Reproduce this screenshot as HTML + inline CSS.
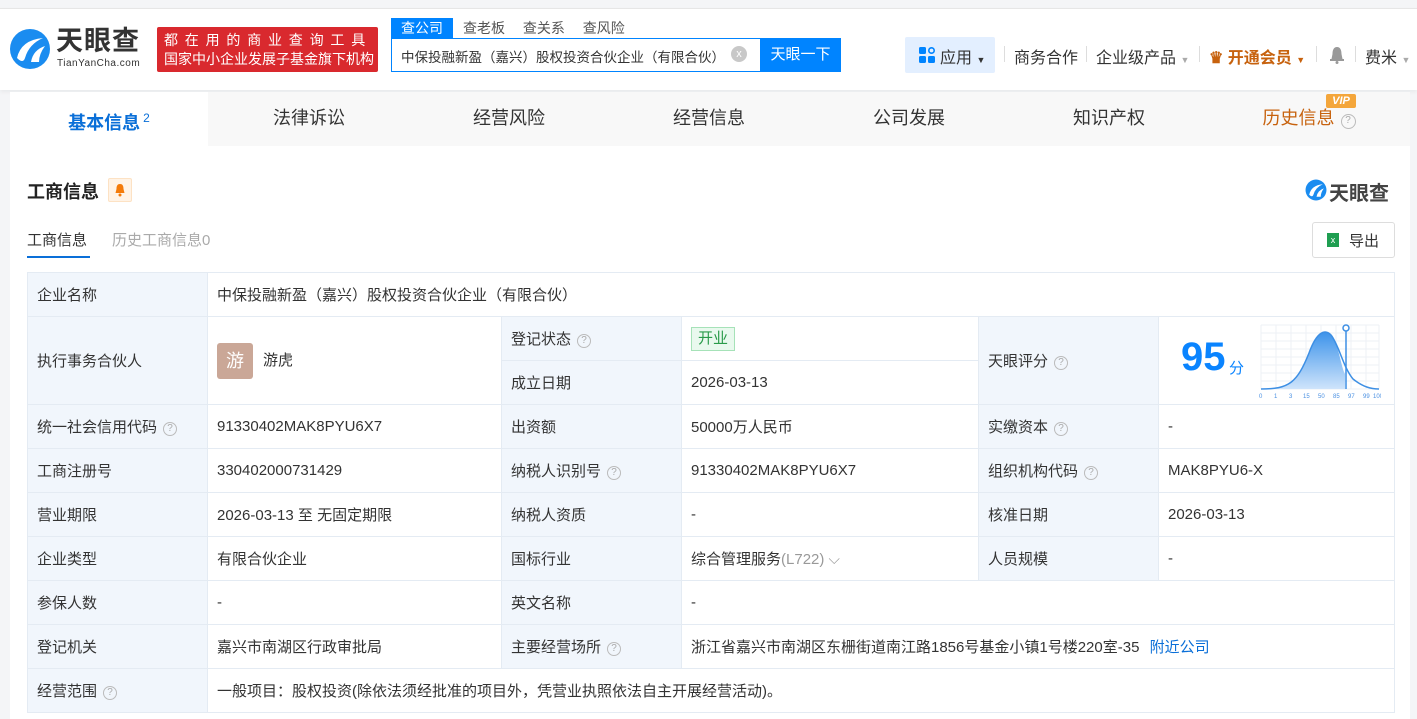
<!DOCTYPE html><html><head><meta charset="utf-8"><style>
*{margin:0;padding:0;box-sizing:border-box}
body{width:1417px;height:719px;overflow:hidden;background:#f4f5f7;font-family:"Liberation Sans","Noto Sans CJK SC",sans-serif;color:#333;position:relative;font-size:15px}
.a{position:absolute}
.hdr{left:0;top:8px;width:1417px;height:82px;background:#fff;border-top:1px solid #e6e6e6;box-shadow:0 2px 4px rgba(0,0,0,.05)}
.tabs{left:10px;top:92px;width:1400px;height:54px;background:#f8f8f8}
.tab{position:absolute;top:0;height:54px;line-height:52px;font-size:18px;color:#333;text-align:center;width:200px}
.card{left:10px;top:146px;width:1400px;height:573px;background:#fff}
table{position:absolute;left:27px;top:272px;border-collapse:collapse;table-layout:fixed;font-size:15px}
td{border:1px solid #e4ebf3;height:44px;padding:0 9px;vertical-align:middle;color:#333}
td.l{background:#f1f6fc}
.q{display:inline-block;width:14px;height:14px;border:1px solid #bbb;border-radius:50%;font-size:10px;line-height:12px;text-align:center;color:#aaa;margin-left:6px;vertical-align:1px}
</style></head><body>
<div class="a hdr"></div>
<svg class="a" style="left:9px;top:28px" width="42" height="42" viewBox="0 0 42 42"><circle cx="21" cy="21" r="20" fill="#1a8cf0"/><path d="M8 30 Q12 12 34 10 Q20 16 16 30 Q14 36 8 30Z" fill="#fff"/><path d="M22 34 Q24 22 36 18 Q30 26 30 34Z" fill="#fff"/></svg>
<div class="a" style="left:56px;top:25px;font-size:27px;line-height:32px;font-weight:bold;color:#333;letter-spacing:1px">天眼查</div>
<div class="a" style="left:57px;top:58px;font-size:10px;line-height:12px;color:#333;letter-spacing:.5px">TianYanCha.com</div>
<div class="a" style="left:157px;top:27px;width:221px;height:45px;background:#d9292e;border-radius:2px;color:#fff;font-size:14px;line-height:19px;padding:4px 0 0 7px;white-space:nowrap;overflow:hidden"><div style="letter-spacing:6.8px">都在用的商业查询工具</div><div>国家中小企业发展子基金旗下机构</div></div>
<div class="a" style="left:391px;top:18px;width:62px;height:20px;background:#0084ff;color:#fff;font-size:14px;text-align:center;line-height:20px">查公司</div>
<div class="a" style="left:463px;top:18px;font-size:14px;color:#555;line-height:20px;word-spacing:14px">查老板 查关系 查风险</div>
<div class="a" style="left:391px;top:38px;width:450px;height:34px;border:1px solid #0084ff;background:#fff"></div>
<div class="a" style="left:401px;top:46px;font-size:13.5px;color:#333">中保投融新盈（嘉兴）股权投资合伙企业（有限合伙）</div>
<div class="a" style="left:731px;top:46px;width:16px;height:16px;border-radius:50%;background:#c8c8c8;color:#fff;font-size:11px;text-align:center;line-height:16px">x</div>
<div class="a" style="left:760px;top:38px;width:81px;height:34px;background:#0084ff;color:#fff;font-size:15px;text-align:center;line-height:34px">天眼一下</div>
<div class="a" style="left:905px;top:37px;width:90px;height:36px;background:#e3efff;border-radius:2px"></div>
<svg class="a" style="left:919px;top:47px" width="16" height="16"><rect width="7" height="7" rx="1.5" fill="#0084ff"/><circle cx="12.5" cy="3.5" r="2.7" fill="none" stroke="#0084ff" stroke-width="1.6"/><rect y="9" width="7" height="7" rx="1.5" fill="#0084ff"/><rect x="9" y="9" width="7" height="7" rx="1.5" fill="#0084ff"/></svg>
<div class="a" style="left:940px;top:44px;font-size:16px;color:#333">应用 <span style="font-size:9px">▼</span></div>
<div class="a" style="left:1014px;top:44px;font-size:16px;color:#333">商务合作</div>
<div class="a" style="left:1096px;top:44px;font-size:16px;color:#333">企业级产品 <span style="font-size:9px;color:#aaa">▼</span></div>
<div class="a" style="left:1209px;top:44px;font-size:16px;color:#c7620e;font-weight:bold">♛ 开通会员 <span style="font-size:9px">▼</span></div>
<svg class="a" style="left:1329px;top:46px" width="16" height="18"><path d="M8 1C4.5 1 3.5 4.5 3.5 8L2.5 13H13.5L12.5 8C12.5 4.5 11.5 1 8 1Z" fill="#999"/><rect x="1" y="13" width="14" height="2" fill="#999"/><circle cx="8" cy="16.5" r="1.5" fill="#999"/></svg>
<div class="a" style="left:1365px;top:44px;font-size:16px;color:#333">费米 <span style="font-size:9px;color:#aaa">▼</span></div>
<div class="a" style="left:1004px;top:46px;width:1px;height:16px;background:#ddd"></div>
<div class="a" style="left:1086px;top:46px;width:1px;height:16px;background:#ddd"></div>
<div class="a" style="left:1199px;top:46px;width:1px;height:16px;background:#ddd"></div>
<div class="a" style="left:1316px;top:46px;width:1px;height:16px;background:#ddd"></div>
<div class="a" style="left:1355px;top:46px;width:1px;height:16px;background:#ddd"></div>

<div class="a tabs">
<div class="tab" style="left:0;width:198px;background:#fff;color:#0a6fd8;font-weight:bold">基本信息<sup style="font-size:12px;font-weight:normal;margin-left:3px">2</sup></div>
<div class="tab" style="left:199px">法律诉讼</div>
<div class="tab" style="left:399px">经营风险</div>
<div class="tab" style="left:599px">经营信息</div>
<div class="tab" style="left:799px">公司发展</div>
<div class="tab" style="left:999px">知识产权</div>
<div class="tab" style="left:1199px;color:#c7620e">历史信息<span class="q" style="width:15px;height:15px">?</span></div>
<div class="a" style="left:1316px;top:2px;width:30px;height:14px;background:#f4a63b;color:#fff;font-size:11px;font-style:italic;font-weight:bold;text-align:center;line-height:14px;border-radius:2px">VIP</div>
</div>
<div class="a card"></div>
<div class="a" style="left:27px;top:178px;font-size:18px;font-weight:bold;color:#222">工商信息</div>
<div class="a" style="left:108px;top:178px;width:24px;height:24px;background:#fff3e6;border:1px solid #fde2c4;border-radius:2px"></div>
<svg class="a" style="left:114px;top:183px" width="12" height="14"><path d="M6 1C3 1 2.5 3.5 2.5 6L1.5 10H10.5L9.5 6C9.5 3.5 9 1 6 1Z" fill="#f47b0a"/><circle cx="6" cy="12" r="1.5" fill="#f47b0a"/></svg>
<svg class="a" style="left:1305px;top:179px" width="22" height="22" viewBox="0 0 42 42"><circle cx="21" cy="21" r="20" fill="#1a8cf0"/><path d="M8 30 Q12 12 34 10 Q20 16 16 30 Q14 36 8 30Z" fill="#fff"/><path d="M22 34 Q24 22 36 18 Q30 26 30 34Z" fill="#fff"/></svg>
<div class="a" style="left:1329px;top:177px;font-size:20px;font-weight:bold;color:#444">天眼查</div>
<div class="a" style="left:27px;top:229px;font-size:15px;color:#333">工商信息</div>
<div class="a" style="left:27px;top:256px;width:63px;height:2px;background:#0a6fd8"></div>
<div class="a" style="left:112px;top:229px;font-size:15px;color:#aaa">历史工商信息0</div>
<div class="a" style="left:1312px;top:222px;width:83px;height:36px;border:1px solid #ddd;border-radius:3px;background:#fff"></div>
<div class="a" style="left:1327px;top:233px;width:12px;height:14px;background:#1f9e51;color:#fff;font-size:9px;text-align:center;line-height:14px">x</div>
<div class="a" style="left:1349px;top:230px;font-size:15px">导出</div>

<table>
<colgroup><col style="width:180px"><col style="width:294px"><col style="width:180px"><col style="width:297px"><col style="width:180px"><col style="width:236px"></colgroup>
<tr><td class="l">企业名称</td><td colspan="5">中保投融新盈（嘉兴）股权投资合伙企业（有限合伙）</td></tr>
<tr><td class="l" rowspan="2">执行事务合伙人</td><td rowspan="2"><span style="display:inline-block;width:36px;height:36px;background:#caa797;border-radius:3px;color:#fff;font-size:18px;text-align:center;line-height:36px;vertical-align:middle;margin-right:10px">游</span>游虎</td><td class="l">登记状态<span class="q">?</span></td><td><span style="display:inline-block;border:1px solid #a6e2b8;background:#e9f9ee;color:#2a9b4a;padding:0 6px;line-height:22px">开业</span></td><td class="l" rowspan="2">天眼评分<span class="q">?</span></td><td rowspan="2" style="position:relative"><span style="position:absolute;left:22px;top:18px;font-size:40px;font-weight:bold;color:#0a84ff">95</span><span style="position:absolute;left:70px;top:40px;font-size:15px;color:#0a84ff">分</span>
<svg style="position:absolute;left:100px;top:6px" width="122" height="76" viewBox="0 0 122 76"><g stroke="#eef1f5" stroke-width="1"><path d="M2 2H120M2 10H120M2 18H120M2 26H120M2 34H120M2 42H120M2 50H120M2 58H120M2 66H120"/><path d="M2 2V66M17 2V66M32 2V66M47 2V66M62 2V66M77 2V66M92 2V66M107 2V66M120 2V66"/></g><defs><linearGradient id="g" x1="0" y1="0" x2="0" y2="1"><stop offset="0" stop-color="#3d93ea"/><stop offset="1" stop-color="#cfe4fb"/></linearGradient></defs><path d="M2 66C30 66 38 60 50 30C58 8 66 6 72 12C80 22 82 44 86 51V66Z" fill="url(#g)"/><path d="M2 66C30 66 38 60 50 30C58 8 66 6 72 12C80 22 84 44 94 56C104 64 112 66 120 66" fill="none" stroke="#3d8fe4" stroke-width="1.5"/><line x1="87" y1="6" x2="87" y2="66" stroke="#3d8fe4" stroke-width="1.5"/><circle cx="87" cy="5" r="3" fill="#fff" stroke="#3d8fe4" stroke-width="1.5"/><text y="75" font-size="6" fill="#4a90e2" font-family="Liberation Sans"><tspan x="0">0</tspan><tspan x="15">1</tspan><tspan x="30">3</tspan><tspan x="44">15</tspan><tspan x="59">50</tspan><tspan x="74">85</tspan><tspan x="89">97</tspan><tspan x="104">99</tspan><tspan x="114">100</tspan></text></svg></td></tr>
<tr><td class="l">成立日期</td><td>2026-03-13</td></tr>
<tr><td class="l">统一社会信用代码<span class="q">?</span></td><td>91330402MAK8PYU6X7</td><td class="l">出资额</td><td>50000万人民币</td><td class="l">实缴资本<span class="q">?</span></td><td>-</td></tr>
<tr><td class="l">工商注册号</td><td>330402000731429</td><td class="l">纳税人识别号<span class="q">?</span></td><td>91330402MAK8PYU6X7</td><td class="l">组织机构代码<span class="q">?</span></td><td>MAK8PYU6-X</td></tr>
<tr><td class="l">营业期限</td><td>2026-03-13 至 无固定期限</td><td class="l">纳税人资质</td><td>-</td><td class="l">核准日期</td><td>2026-03-13</td></tr>
<tr><td class="l">企业类型</td><td>有限合伙企业</td><td class="l">国标行业</td><td>综合管理服务<span style="color:#999">(L722) ⌵</span></td><td class="l">人员规模</td><td>-</td></tr>
<tr><td class="l">参保人数</td><td>-</td><td class="l">英文名称</td><td colspan="3">-</td></tr>
<tr><td class="l">登记机关</td><td>嘉兴市南湖区行政审批局</td><td class="l">主要经营场所<span class="q">?</span></td><td colspan="3">浙江省嘉兴市南湖区东栅街道南江路1856号基金小镇1号楼220室-35 <span style="color:#0a6fd8;margin-left:6px">附近公司</span></td></tr>
<tr><td class="l">经营范围<span class="q">?</span></td><td colspan="5">一般项目：股权投资(除依法须经批准的项目外，凭营业执照依法自主开展经营活动)。</td></tr>
</table>
</body></html>
